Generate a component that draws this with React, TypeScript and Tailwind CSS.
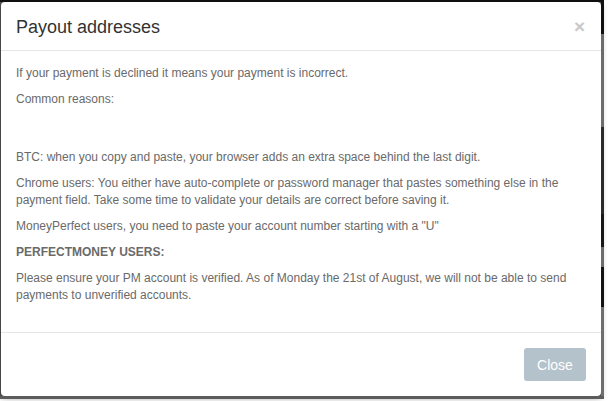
const rightStrip = [
  { h: 'h-[32px]', c: 'bg-[#101010]' },
  { h: 'h-[93px]', c: 'bg-[#6c6c6c]' },
  { h: 'h-[87px]', c: 'bg-[#2a2a2a]' },
  { h: 'h-[33px]', c: 'bg-[#171717]' },
  { h: 'h-[20px]', c: 'bg-[#6c6c6c]' },
  { h: 'h-[40px]', c: 'bg-[#101316]' },
  { h: 'flex-1', c: 'bg-[#6e6e6e]' },
];

const PayoutModal = () => {
  return (
    <div className="w-[600px] h-[394px] bg-white rounded-[4px] flex flex-col shadow-[0_2px_6px_rgba(0,0,0,0.4)]">
      <div className="h-[49px] border-b border-[#e5e5e5] flex items-center justify-between pl-[15px] pr-[16px] shrink-0">
        <h4 className="text-[18px] leading-none text-[#333] mt-[1px]">Payout addresses</h4>
        <button className="text-[19px] font-bold leading-none text-[#c9c9c9] mt-[1px]">×</button>
      </div>

      <div className="flex-1 pl-[15px] pr-[15px] pt-[14px] text-[12px] leading-[17px] text-[#6a6a6a]">
        <p className="mb-[9px]">If your payment is declined it means your payment is incorrect.</p>
        <p className="mb-[41px]">Common reasons:</p>
        <p className="mb-[9px]">BTC: when you copy and paste, your browser adds an extra space behind the last digit.</p>
        <p className="mb-[9px]">
          Chrome users: You either have auto-complete or password manager that pastes something else in the
          <br />
          payment field. Take some time to validate your details are correct before saving it.
        </p>
        <p className="mb-[9px]">MoneyPerfect users, you need to paste your account number starting with a "U"</p>
        <p className="mb-[9px] font-bold">PERFECTMONEY USERS:</p>
        <p>
          Please ensure your PM account is verified. As of Monday the 21st of August, we will not be able to send
          <br />
          payments to unverified accounts.
        </p>
      </div>

      <div className="h-[64px] border-t border-[#e5e5e5] flex items-center justify-end pr-[15px] shrink-0">
        <button className="w-[62px] h-[33px] rounded-[3px] bg-[#b4c2cb] text-white text-[14px] leading-none">
          Close
        </button>
      </div>
    </div>
  );
};

export default function App() {
  return (
    <div
      className="w-[610px] h-[401px] bg-white"
      style={{ fontFamily: '"Liberation Sans", Arial, sans-serif' }}
    >
      <div className="w-[604px] h-[399px] flex flex-col bg-[#5a5a5a]">
        <div className="h-[2px] bg-[#111] shrink-0" />
        <div className="flex h-[394px] shrink-0">
          <div className="w-[1px] bg-[#555] shrink-0" />
          <PayoutModal />
          <div className="flex-1 flex flex-col">
            {rightStrip.map((s, i) => (
              <div key={i} className={`${s.h} ${s.c}`} />
            ))}
          </div>
        </div>
        <div className="flex-1 bg-[#5c5c5c]" />
      </div>
    </div>
  );
}
